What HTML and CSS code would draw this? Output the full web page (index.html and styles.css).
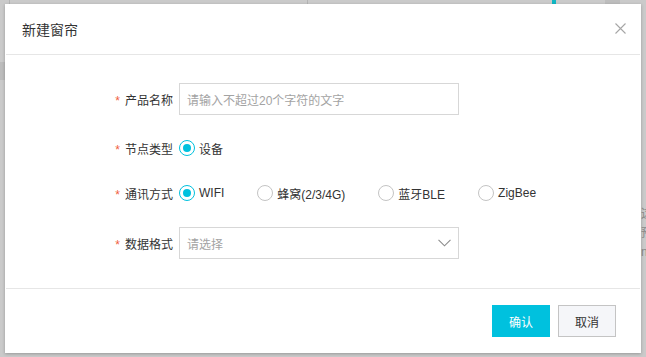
FILE: index.html
```html
<!DOCTYPE html>
<html lang="zh-CN">
<head>
<meta charset="utf-8">
<title>新建窗帘</title>
<link rel="stylesheet" href="styles.css">
</head>
<body>
<div class="backdrop">
  <div class="bg-line bg-line-a"></div>
  <div class="bg-line bg-line-b"></div>
  <div class="bg-teal"></div>
  <div class="bg-box"></div>
  <div class="bg-left-block"></div>
  <div class="bg-right-text">这<br>预<br>n</div>
</div>
<div class="modal">
  <div class="modal-header">
    <span class="modal-title">新建窗帘</span>
    <svg class="close" width="11" height="11" viewBox="0 0 11 11"><path d="M0.5 0.5 L10.5 10.5 M10.5 0.5 L0.5 10.5" stroke="#a6a6a6" stroke-width="1.1" fill="none"/></svg>
  </div>
  <div class="modal-body">
    <div class="form-row row-input">
      <label class="form-label"><span class="req">*</span>产品名称</label>
      <div class="input"><span class="placeholder">请输入不超过20个字符的文字</span></div>
    </div>
    <div class="form-row row-radio1">
      <label class="form-label"><span class="req">*</span>节点类型</label>
      <div class="radio-group">
        <span class="radio-item"><span class="radio checked"></span>设备</span>
      </div>
    </div>
    <div class="form-row row-radio2">
      <label class="form-label"><span class="req">*</span>通讯方式</label>
      <div class="radio-group">
        <span class="radio-item"><span class="radio checked"></span>WIFI</span>
        <span class="radio-item"><span class="radio"></span>蜂窝(2/3/4G)</span>
        <span class="radio-item"><span class="radio"></span>蓝牙BLE</span>
        <span class="radio-item"><span class="radio"></span>ZigBee</span>
      </div>
    </div>
    <div class="form-row row-select">
      <label class="form-label"><span class="req">*</span>数据格式</label>
      <div class="input select"><span class="placeholder">请选择</span>
        <svg class="chevron" width="13" height="8" viewBox="0 0 13 8"><path d="M0.5 0.8 L6.5 6.8 L12.5 0.8" stroke="#8c8c8c" stroke-width="1.1" fill="none"/></svg>
      </div>
    </div>
  </div>
  <div class="modal-footer">
    <button class="btn btn-primary">确认</button>
    <button class="btn btn-default">取消</button>
  </div>
</div>
</body>
</html>
```

FILE: styles.css
```css
html, body {
  margin: 0;
  padding: 0;
  width: 646px;
  height: 357px;
  overflow: hidden;
  background: #c9c9c9;
  font-family: "Liberation Sans", "Noto Sans CJK SC", sans-serif;
  font-size: 12px;
  color: #333;
}

.backdrop {
  position: absolute;
  inset: 0;
  background: #cacaca;
}
.bg-line {
  position: absolute;
  top: 0;
  width: 1px;
  height: 6px;
  background: #b4b4b4;
}
.bg-line-a { left: 9px; }
.bg-line-b { left: 307px; }
.bg-teal {
  position: absolute;
  left: 552px;
  top: 0;
  width: 4px;
  height: 5px;
  background: #10b7c4;
}
.bg-box {
  position: absolute;
  left: 605px;
  top: 0;
  width: 15px;
  height: 5px;
  background: #bdbdbd;
}
.bg-left-block {
  position: absolute;
  left: 0;
  top: 62px;
  width: 5px;
  height: 18px;
  background: #bcbcbc;
}
.bg-right-text {
  position: absolute;
  left: 641px;
  top: 205px;
  font-size: 12px;
  line-height: 19px;
  color: #8a8a8a;
}

.modal {
  position: absolute;
  left: 5px;
  top: 4px;
  width: 636px;
  height: 349px;
  background: #fff;
  box-shadow: 0 1px 3px rgba(0, 0, 0, 0.25);
  display: flex;
  flex-direction: column;
}

.modal-header {
  height: 50px;
  border-bottom: 1px solid #e6e6e6;
  margin: 0 1px;
  display: flex;
  align-items: center;
  justify-content: space-between;
  padding: 0 14px 0 16px;
  flex: none;
}
.modal-title {
  font-size: 14px;
  color: #333;
}
.close {
  display: block;
  margin-top: -2px;
}

.modal-body {
  flex: 1;
  padding-top: 28px;
  display: flex;
  flex-direction: column;
}

.form-row {
  display: flex;
  align-items: center;
}
.row-input { height: 32px; margin-bottom: 18px; }
.row-radio1 { height: 30px; margin-bottom: 15px; }
.row-radio2 { height: 30px; margin-bottom: 19px; }
.row-select { height: 32px; }

.form-label {
  width: 168px;
  text-align: right;
  margin-right: 6px;
  color: #333;
  white-space: nowrap;
}
.req {
  color: #f0603e;
  margin-right: 5px;
}

.input {
  box-sizing: border-box;
  width: 280px;
  height: 32px;
  border: 1px solid #d7d7d7;
  display: flex;
  align-items: center;
  padding: 0 7px;
}
.placeholder {
  color: #a3a3a3;
}
.select {
  justify-content: space-between;
}
.chevron {
  display: block;
  margin-right: 0;
}

.radio-group {
  display: flex;
  align-items: center;
}
.radio-item {
  display: flex;
  align-items: center;
  margin-right: 33px;
  color: #333;
}
.radio {
  box-sizing: border-box;
  width: 16px;
  height: 16px;
  border-radius: 50%;
  border: 1px solid #c4c4c4;
  margin-right: 4px;
  position: relative;
}
.radio.checked {
  border: 1.5px solid #00c1de;
}
.radio.checked::after {
  content: "";
  position: absolute;
  left: 50%;
  top: 50%;
  width: 8px;
  height: 8px;
  margin: -4px 0 0 -4px;
  border-radius: 50%;
  background: #00c1de;
}

.modal-footer {
  flex: none;
  height: 65px;
  border-top: 1px solid #e6e6e6;
  margin: 0 1px;
  display: flex;
  justify-content: flex-end;
  align-items: flex-start;
  padding: 16px 24px 0 0;
  box-sizing: border-box;
  gap: 8px;
}
.btn {
  width: 58px;
  height: 32px;
  font-family: "Liberation Sans", "Noto Sans CJK SC", sans-serif;
  font-size: 12px;
  padding: 0;
  box-sizing: border-box;
  cursor: pointer;
}
.btn-primary {
  background: #00c1de;
  border: 1px solid #00c1de;
  color: #fff;
}
.btn-default {
  background: #f5f6f9;
  border: 1px solid #c4c4c4;
  color: #333;
}
```
